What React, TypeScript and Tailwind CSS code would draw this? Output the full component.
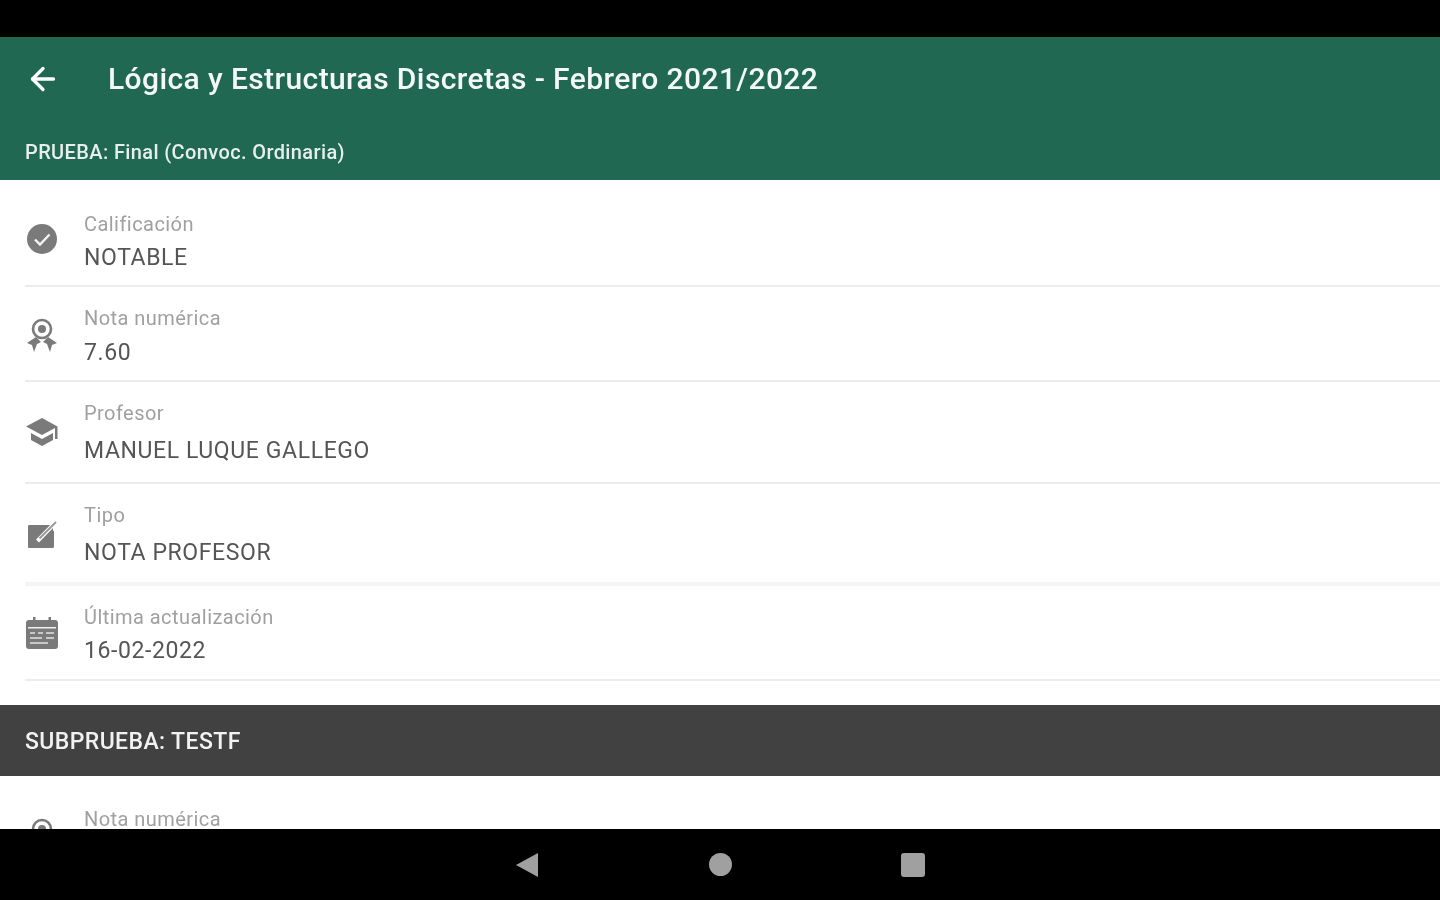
import { ArrowLeft } from 'lucide-react';
import type { ReactNode } from 'react';

function CheckIcon() {
    return (
        <svg width="36" height="36" viewBox="0 0 36 36" fill="none">
            <circle cx="18" cy="18" r="15" fill="#7a7a7a" />
            <path d="M11 18.500l5 5 9.500-10" stroke="#f4f4f4" strokeWidth="2.400" />
        </svg>
    );
}

function AwardIcon() {
    return (
        <svg width="36" height="40" viewBox="0 0 36 40" fill="none">
            <circle cx="18" cy="12" r="9" stroke="#7a7a7a" strokeWidth="2.600" />
            <circle cx="18" cy="12" r="4" fill="#7a7a7a" />
            <path d="M3 26l9-6 5 5-4 2-3 8-2-7-5-2z" fill="#7a7a7a" />
            <path d="M33 26l-9-6-5 5 4 2 3 8 2-7 5-2z" fill="#7a7a7a" />
        </svg>
    );
}

function SchoolIcon() {
    return (
        <svg width="36" height="36" viewBox="0 0 36 36" fill="none">
            <path d="M18 4L2 12.500l16 8.500 13-7V25h2.500V12.500L18 4z" fill="#7a7a7a" />
            <path d="M7 19v7l11 6 11-6v-7l-11 6-11-6z" fill="#7a7a7a" />
        </svg>
    );
}

function EditIcon() {
    return (
        <svg width="36" height="36" viewBox="0 0 36 36" fill="none">
            <path d="M4 9.500A1.500 1.500 0 0 1 5.500 8H27v6l-9 10h-5v-5l9-9H12v2h-1v17h18V14h1v15.500a1.500 1.500 0 0 1-1.500 1.500h-23A1.500 1.500 0 0 1 4 29.500z" fill="#7a7a7a" />
            <rect x="4" y="8" width="25" height="23" rx="2" fill="#7a7a7a" />
            <path d="M13.500 24L30 7" stroke="#ffffff" strokeWidth="4" />
            <path d="M15.500 21.500L32 5" stroke="#9a9a9a" strokeWidth="2" />
        </svg>
    );
}

function CalendarIcon() {
    return (
        <svg width="36" height="36" viewBox="0 0 36 36" fill="none">
            <rect x="2" y="5" width="32" height="29" rx="3" fill="#7a7a7a" />
            <rect x="9" y="2" width="2.500" height="5" fill="#7a7a7a" />
            <rect x="24.500" y="2" width="2.500" height="5" fill="#7a7a7a" />
            <rect x="4" y="12" width="28" height="1.500" fill="#f0f0f0" />
            <path d="M6 18h5M14 18h5M22 18h8M6 23h12M22 23h8M6 28h18" stroke="#c8c8c8" strokeWidth="2.200" />
        </svg>
    );
}

type RowProps = {
    icon: ReactNode;
    label: string;
    value: string;
    height: string;
    labelTop: string;
    valueGap: string;
    iconTop?: string;
    thick?: boolean;
};

function Row({ icon, label, value, height, labelTop, valueGap, iconTop, thick }: RowProps) {
    return (
        <div className={`flex ml-[25px] ${height} ${thick ? 'border-b-4 border-[#f4f4f4]' : 'border-b-2 border-[#ececec]'}`}>
            <div className={`w-[59px] flex items-center ${iconTop ?? ''}`}>
                <div className="w-[36px] -ml-[1px] flex justify-center">{icon}</div>
            </div>
            <div className={`flex flex-col ${labelTop}`}>
                <span className="text-[20px] leading-[24px] tracking-[0.45px] text-[#a0a0a0]">{label}</span>
                <span className={`text-[23px] leading-[28px] tracking-[0.6px] text-[#555555] ${valueGap}`}>{value}</span>
            </div>
        </div>
    );
}

export default function App() {
    return (
        <div className="h-[900px] w-[1440px] overflow-hidden flex flex-col bg-white blur-[0.7px] font-['Roboto',sans-serif]">
            <div className="h-[37px] bg-black" />
            <div className="h-[143px] bg-[#216853] text-white">
                <div className="h-[83px] flex items-center pl-[25px]">
                    <ArrowLeft size={36} strokeWidth={2.2} />
                    <span className="ml-[47px] text-[30px] font-medium tracking-[0.4px] text-[#f4f8f6]">Lógica y Estructuras Discretas - Febrero 2021/2022</span>
                </div>
                <div className="h-[60px] flex items-center pl-[25px] pt-[4px] text-[20px] font-medium tracking-[0.38px] text-[#e6efeb]">PRUEBA: Final (Convoc. Ordinaria)</div>
            </div>
            <Row icon={<CheckIcon />} label="Calificación" value="NOTABLE" height="h-[107px]" labelTop="pt-[32px]" valueGap="mt-[8px]" iconTop="pt-[12px]" />
            <Row icon={<AwardIcon />} label="Nota numérica" value="7.60" height="h-[95px]" labelTop="pt-[19px]" valueGap="mt-[9px]" iconTop="pt-[6px]" />
            <Row icon={<SchoolIcon />} label="Profesor" value="MANUEL LUQUE GALLEGO" height="h-[102px]" labelTop="pt-[19px]" valueGap="mt-[12px]" />
            <Row icon={<EditIcon />} label="Tipo" value="NOTA PROFESOR" height="h-[102px]" labelTop="pt-[19px]" valueGap="mt-[12px]" iconTop="pt-[4px]" thick />
            <Row icon={<CalendarIcon />} label="Última actualización" value="16-02-2022" height="h-[95px]" labelTop="pt-[19px]" valueGap="mt-[8px]" />
            <div className="h-[24px]" />
            <div className="h-[71px] flex items-center pl-[25px] pt-[3px] bg-[#404140] text-[23px] font-medium tracking-[0.4px] text-[#f2f2f2]">SUBPRUEBA: TESTF</div>
            <div className="h-[53px] overflow-hidden flex ml-[25px]">
                <div className="w-[59px] shrink-0 pt-[41px]"><div className="-ml-[1px]"><AwardIcon /></div></div>
                <span className="pt-[34px] text-[20px] leading-[19px] tracking-[0.45px] text-[#a0a0a0]">Nota numérica</span>
            </div>
            <div className="h-[71px] bg-black flex items-center justify-center">
                <div className="w-[410px] flex items-center justify-between">
                    <svg width="24" height="26" viewBox="0 0 24 26"><path d="M23 1v24L1 13z" fill="#a0a0a0" /></svg>
                    <div className="w-[23px] h-[23px] rounded-full bg-[#a0a0a0]" />
                    <div className="w-[24px] h-[24px] rounded-[3px] bg-[#a0a0a0]" />
                </div>
            </div>
        </div>
    );
}
